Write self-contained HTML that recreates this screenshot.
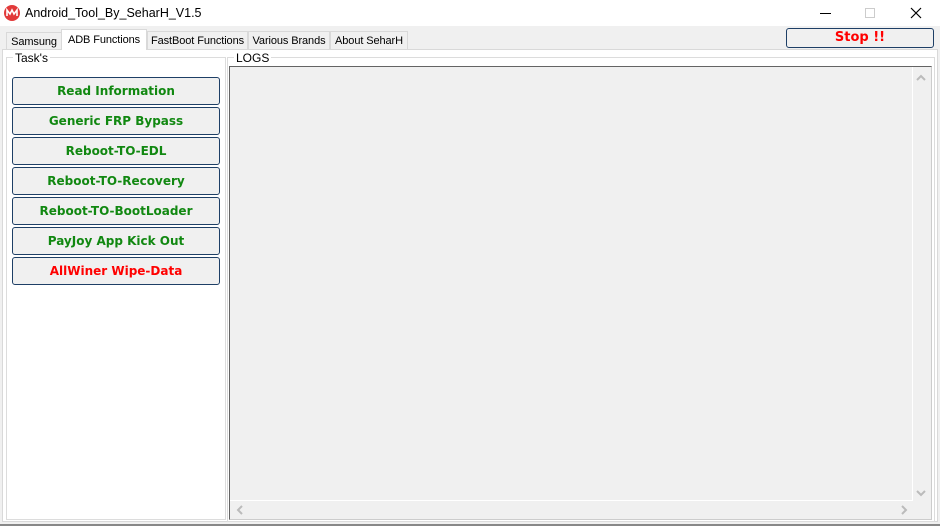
<!DOCTYPE html>
<html><head><style>
*{margin:0;padding:0;box-sizing:border-box}
body{width:940px;height:526px;background:#f0f0f0;font-family:"Liberation Sans",sans-serif;font-size:12px;position:relative;overflow:hidden;color:#000}
.a{position:absolute;white-space:nowrap}
.title{left:0;top:0;width:940px;height:26px;background:#fff}
.tab{top:31px;height:19px;background:#f0f0f0;border:1px solid #d9d9d9;border-bottom:none;line-height:18px;font-size:11px;text-align:center;letter-spacing:-0.1px}
.btn{left:12px;width:208px;height:28px;border:1px solid #1e3f66;border-radius:3px;background:#f0f0f0;text-align:center;line-height:27px;font-weight:bold;color:#118811;font-family:"DejaVu Sans",sans-serif;font-size:12px}
</style></head><body>
<div class="a title"></div>
<svg class="a" style="left:3px;top:4px" width="18" height="18" viewBox="0 0 18 18"><circle cx="9" cy="9" r="8" fill="#e23a3a"/><path d="M4 12V6l3 4 2-4 2 4 3-4v6" stroke="#fff" stroke-width="1.6" fill="none"/></svg>
<div class="a" style="left:25px;top:6px;font-size:12.5px">Android_Tool_By_SeharH_V1.5</div>
<div class="a" style="left:820px;top:13px;width:11px;height:1px;background:#000"></div>
<div class="a" style="left:865px;top:8px;width:10px;height:10px;border:1px solid #ccc"></div>
<svg class="a" style="left:910px;top:7px" width="12" height="12"><path d="M1 1L11 11M11 1L1 11" stroke="#000" stroke-width="1.2"/></svg>
<div class="a tab" style="left:6px;width:56px;top:32px;height:18px">Samsung</div>
<div class="a tab" style="left:61px;width:86px;top:29px;height:21px;background:#fff;z-index:2;line-height:20px">ADB Functions</div>
<div class="a tab" style="left:147px;width:101px">FastBoot Functions</div>
<div class="a tab" style="left:248px;width:82px">Various Brands</div>
<div class="a tab" style="left:330px;width:78px">About SeharH</div>
<div class="a" style="left:786px;top:28px;width:148px;height:20px;border:1px solid #1e3f66;border-radius:3px;text-align:center;line-height:18px;color:#f00;font-weight:bold;font-size:13px;font-family:'DejaVu Sans',sans-serif">Stop !!</div>
<div class="a" style="left:2px;top:49px;width:936px;height:473px;background:#fff;border:1px solid #d9d9d9"></div>
<div class="a" style="left:6px;top:57px;width:220px;height:463px;border:1px solid #dcdcdc"></div>
<div class="a" style="left:13px;top:51px;background:#fff;padding:0 2px">Task's</div>
<div class="a" style="left:227px;top:57px;width:708px;height:465px;border:1px solid #dcdcdc"></div>
<div class="a" style="left:234px;top:51px;background:#fff;padding:0 2px">LOGS</div>
<div class="a" style="left:229px;top:66px;width:703px;height:454px;background:#f0f0f0;border:1px solid #646464;border-right-color:#ccc;border-bottom-color:#ccc"></div>
<div class="a" style="left:230px;top:67px;width:683px;height:434px;border-right:1px solid #fff;border-bottom:1px solid #fff"></div>
<svg class="a" style="left:913px;top:70px" width="16" height="440" fill="none" stroke="#bbb" stroke-width="2"><path d="M4 10l4-4 4 4"/><path d="M4 421l4 4 4-4"/></svg>
<svg class="a" style="left:232px;top:502px" width="680" height="16" fill="none" stroke="#bbb" stroke-width="2"><path d="M10 4l-4 4 4 4"/><path d="M670 4l4 4-4 4"/></svg>
<div class="a" style="left:0;top:524px;width:940px;height:2px;background:#888"></div>
<div class="a btn" style="top:77px">Read Information</div>
<div class="a btn" style="top:107px">Generic FRP Bypass</div>
<div class="a btn" style="top:137px">Reboot-TO-EDL</div>
<div class="a btn" style="top:167px">Reboot-TO-Recovery</div>
<div class="a btn" style="top:197px">Reboot-TO-BootLoader</div>
<div class="a btn" style="top:227px">PayJoy App Kick Out</div>
<div class="a btn" style="top:257px;color:#f00">AllWiner Wipe-Data</div>
</body></html>
